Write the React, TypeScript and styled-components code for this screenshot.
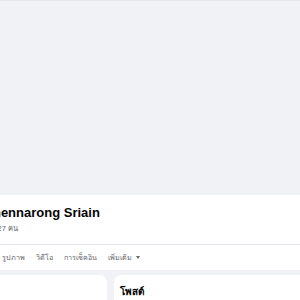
import styled, { createGlobalStyle } from 'styled-components';

const GlobalStyle = createGlobalStyle`
  body {
    margin: 0;
    background: #f0f2f5;
    font-family: "Liberation Sans", "Noto Sans", sans-serif;
    overflow: hidden;
  }
`;

const Page = styled.div`
  width: 300px;
  height: 300px;
  overflow: hidden;
  background: #f0f2f5;
`;

const TopShadow = styled.div`
  height: 1px;
  background: #e4e6eb;
`;

const Cover = styled.div`
  height: 194px;
  background: #f0f2f5;
`;

const Header = styled.div`
  background: #fff;
  display: flex;
  flex-direction: column;
`;

const Intro = styled.div`
  height: 49px;
  display: flex;
  flex-direction: column;
  padding-top: 9px;
  box-sizing: border-box;
`;

const Name = styled.h1`
  margin: 0 0 0 -15px;
  font-size: 13px;
  line-height: 18px;
  font-weight: 700;
  color: #050505;
  white-space: nowrap;
`;

const Friends = styled.span`
  margin-left: -33px;
  margin-top: 2px;
  font-size: 7.5px;
  line-height: 10px;
  color: #65676b;
  white-space: nowrap;
`;

const Divider = styled.div`
  height: 1px;
  background: #e4e6eb;
`;

const Tabs = styled.nav`
  height: 25px;
  display: flex;
  align-items: center;
  gap: 11px;
  padding-left: 2px;
`;

const Tab = styled.span`
  font-size: 7.2px;
  font-weight: 400;
  color: #65676b;
  white-space: nowrap;
  display: flex;
  align-items: center;
  gap: 4px;
`;

const Caret = styled.span`
  display: inline-block;
  width: 0;
  height: 0;
  border-left: 2.5px solid transparent;
  border-right: 2.5px solid transparent;
  border-top: 3px solid #65676b;
`;

const Body = styled.div`
  display: grid;
  grid-template-columns: 107px 1fr;
  gap: 7px;
  padding-top: 5px;
`;

const Card = styled.div<{ $left?: boolean }>`
  background: #fff;
  border-radius: ${(p) => (p.$left ? '0 7px 0 0' : '7px 0 0 0')};
  height: 60px;
  padding: 9px 6px;
  box-sizing: border-box;
`;

const CardTitle = styled.h2`
  margin: 0;
  font-size: 10px;
  font-weight: 700;
  color: #050505;
`;

const App = () => {
  return (
    <Page>
      <GlobalStyle />
      <TopShadow />
      <Cover />
      <Header>
        <Intro>
          <Name>Thennarong Sriain</Name>
          <Friends>เพื่อน 1,027 คน</Friends>
        </Intro>
        <Divider />
        <Tabs>
          <Tab>รูปภาพ</Tab>
          <Tab>วิดีโอ</Tab>
          <Tab>การเช็คอิน</Tab>
          <Tab>
            เพิ่มเติม <Caret />
          </Tab>
        </Tabs>
      </Header>
      <Body>
        <Card $left />
        <Card>
          <CardTitle>โพสต์</CardTitle>
        </Card>
      </Body>
    </Page>
  );
};

export default App;
